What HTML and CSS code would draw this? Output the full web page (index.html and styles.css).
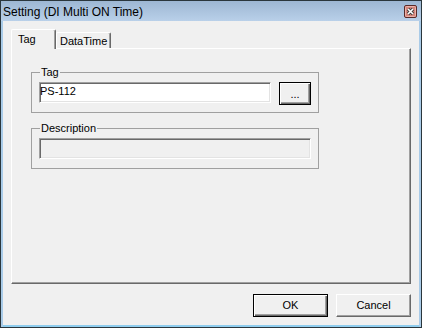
FILE: index.html
```html
<!DOCTYPE html>
<html>
<head>
<meta charset="utf-8">
<link rel="stylesheet" href="styles.css">
</head>
<body>
<div class="window">
  <div class="titlebar">
    <span class="title">Setting (DI Multi ON Time)</span>
    <span class="close">
      <svg width="13" height="13" viewBox="0 0 13 13">
        <rect x="0.5" y="0.5" width="12" height="12" rx="1.5" fill="#d5857b" stroke="#5a2a28"/>
        <rect x="1.5" y="1.5" width="10" height="10" rx="1" fill="none" stroke="#eab2aa"/>
        <path d="M4 4 L9 9 M9 4 L4 9" stroke="#3c3c3c" stroke-width="3.2"/>
        <path d="M4 4 L9 9 M9 4 L4 9" stroke="#ffffff" stroke-width="1.6"/>
      </svg>
    </span>
  </div>
  <div class="client">
    <div class="tabs">
      <div class="tab active">Tag</div>
      <div class="tab">DataTime</div>
    </div>
    <div class="pane">
      <fieldset class="group g-tag">
        <legend>Tag</legend>
        <div class="row">
          <div class="edit wide">PS-112</div>
          <div class="btn default small">...</div>
        </div>
      </fieldset>
      <fieldset class="group g-desc">
        <legend>Description</legend>
        <div class="edit disabled"></div>
      </fieldset>
    </div>
    <div class="buttons">
      <div class="btn default">OK</div>
      <div class="btn">Cancel</div>
    </div>
  </div>
</div>
</body>
</html>
```
FILE: styles.css
```css
html, body {
  margin: 0;
  padding: 0;
  background: #f0f0f0;
}
body {
  font-family: "Liberation Sans", Arial, sans-serif;
  font-size: 11px;
  color: #000;
}
.window {
  width: 422px;
  height: 328px;
  box-sizing: border-box;
  border: 1px solid #2a363c;
  background: #a9cbe8;
  display: flex;
  flex-direction: column;
}
.titlebar {
  height: 20px;
  flex: none;
  display: flex;
  align-items: flex-start;
  justify-content: space-between;
  padding: 0 4px 0 2px;
  background: linear-gradient(#9db7d3, #b9d0e9);
}
.title {
  font-size: 12px;
  line-height: 14px;
  margin-top: 4px;
  white-space: nowrap;
}
.close {
  width: 13px;
  height: 13px;
  margin-top: 4px;
  display: block;
}
.close svg { display: block; }
.client {
  flex: 1;
  margin: 0 2px 2px;
  background: #f0f0f0;
  padding: 8px;
  display: flex;
  flex-direction: column;
  box-shadow: 0 2px 0 #8fcdee;
}
.tabs {
  display: flex;
  align-items: flex-end;
  height: 19px;
  position: relative;
  z-index: 1;
}
.tab {
  box-sizing: border-box;
  height: 16px;
  line-height: 13px;
  padding: 2px 0 0 3px;
  width: 55px;
  border-top: 1px solid #fff;
  border-left: 1px solid #fff;
  border-right: 1px solid #696969;
  border-top-left-radius: 2px;
  border-top-right-radius: 2px;
  box-shadow: inset -1px 0 0 #a0a0a0;
  background: #f0f0f0;
  white-space: nowrap;
}
.tab.active {
  width: 45px;
  height: 20px;
  margin-bottom: -1px;
  padding: 3px 0 0 6px;
}
.pane {
  box-sizing: border-box;
  height: 236px;
  border-top: 1px solid #fff;
  border-left: 1px solid #fff;
  border-right: 1px solid #696969;
  border-bottom: 1px solid #696969;
  box-shadow: inset -1px -1px 0 #a0a0a0;
  padding: 17px 0 0 19px;
}
.group {
  box-sizing: border-box;
  width: 288px;
  margin: 0;
  padding: 3px 7px 7px;
  border: 1px solid #a0a0a0;
  min-width: 0;
}
.group legend {
  padding: 0 1px;
  margin-left: 1px;
  line-height: 13px;
}
.g-desc {
  margin-top: 9px;
  padding-bottom: 9px;
}
.row {
  display: flex;
  align-items: flex-start;
  gap: 8px;
}
.edit {
  box-sizing: border-box;
  height: 21px;
  width: 272px;
  line-height: 17px;
  padding: 0;
  background: #fff;
  border-top: 1px solid #a0a0a0;
  border-left: 1px solid #a0a0a0;
  border-right: 1px solid #fff;
  border-bottom: 1px solid #fff;
  box-shadow: inset 1px 1px 0 #696969, inset -1px -1px 0 #e3e3e3;
  white-space: nowrap;
}
.edit.wide { width: 232px; }
.edit.disabled { background: #f0f0f0; }
.btn {
  box-sizing: border-box;
  width: 75px;
  height: 23px;
  display: flex;
  align-items: center;
  justify-content: center;
  line-height: 13px;
  background: #f0f0f0;
  border-top: 1px solid #fff;
  border-left: 1px solid #fff;
  border-right: 1px solid #696969;
  border-bottom: 1px solid #696969;
  box-shadow: inset -1px -1px 0 #a0a0a0;
}
.btn.default {
  border: 1px solid #000;
  box-shadow: inset 1px 1px 0 #fff, inset -1px -1px 0 #696969, inset -2px -2px 0 #a0a0a0;
}
.btn.small {
  width: 32px;
  padding-top: 1px;
}
.buttons {
  display: flex;
  justify-content: flex-end;
  gap: 8px;
  margin-top: 10px;
}
```
